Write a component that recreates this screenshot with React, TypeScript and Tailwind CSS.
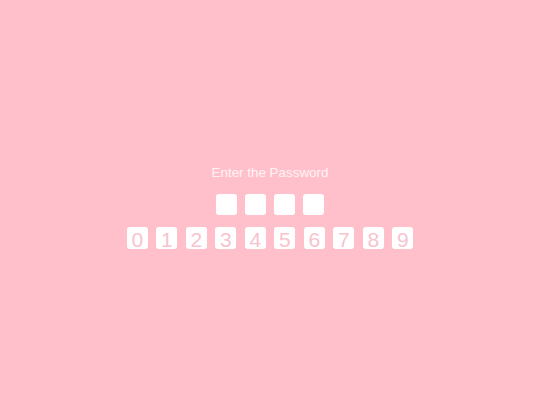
export default function App() {
  const digits = ['0', '1', '2', '3', '4', '5', '6', '7', '8', '9'];
  return (
    <div
      className="h-[405px] w-[540px] bg-[#ffc0cb] flex flex-col items-center justify-center pt-[8px]"
      style={{ fontFamily: '"Liberation Sans", Arial, sans-serif' }}
    >
      <div className="text-[13.4px] leading-[15px] text-[#fff3f5] translate-y-[1px]">Enter the Password</div>
      <div className="mt-[15px] flex gap-[8px]">
        {[0, 1, 2, 3].map((i) => (
          <div key={i} className="w-[21px] h-[21px] rounded-[3px] bg-white" />
        ))}
      </div>
      <div className="mt-[12.5px] flex gap-[8.5px]">
        {digits.map((d) => (
          <div
            key={d}
            className="w-[21px] h-[22px] rounded-[3px] bg-white flex items-end justify-center text-[21px] leading-[19px] text-[#f7c3cd]"
          >
            {d}
          </div>
        ))}
      </div>
    </div>
  );
}
